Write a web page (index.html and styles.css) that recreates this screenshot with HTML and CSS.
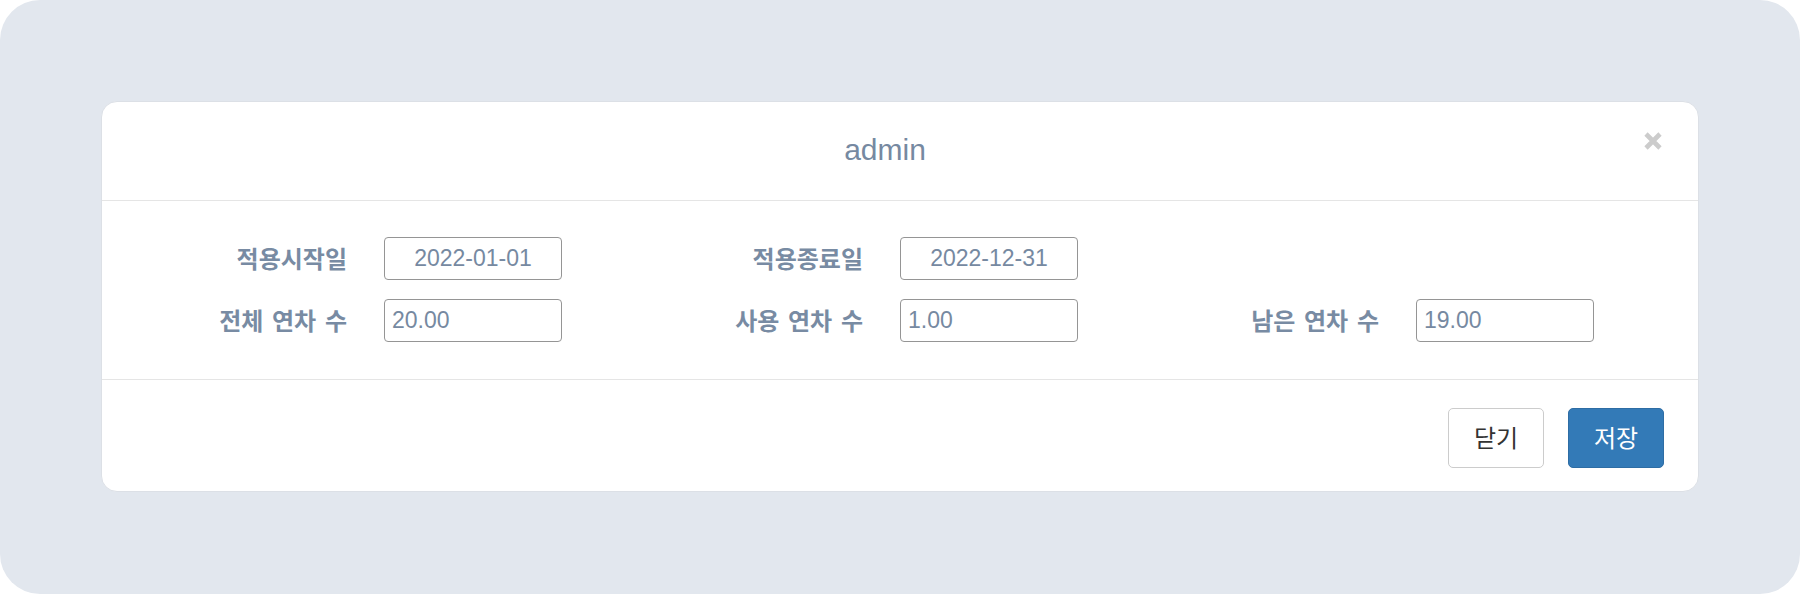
FILE: index.html
```html
<!DOCTYPE html>
<html lang="ko">
<head>
<meta charset="utf-8">
<title>admin</title>
<link rel="stylesheet" href="styles.css">
</head>
<body>
<div class="screen">
  <div class="modal">
    <div class="modal-header">
      <h4 class="modal-title">admin</h4>
      <button class="close" type="button" aria-label="close">
        <svg width="20" height="18" viewBox="0 0 20 18"><path d="M3 2 L17 16 M17 2 L3 16" stroke="#cccccc" stroke-width="4.6" stroke-linecap="butt"/></svg>
      </button>
    </div>
    <div class="modal-body">
      <div class="form-row">
        <div class="field"><label class="label">적용시작일</label><input class="input center" type="text" value="2022-01-01"></div>
        <div class="field"><label class="label">적용종료일</label><input class="input center" type="text" value="2022-12-31"></div>
      </div>
      <div class="form-row">
        <div class="field"><label class="label">전체 연차 수</label><input class="input" type="text" value="20.00"></div>
        <div class="field"><label class="label">사용 연차 수</label><input class="input" type="text" value="1.00"></div>
        <div class="field"><label class="label">남은 연차 수</label><input class="input" type="text" value="19.00"></div>
      </div>
    </div>
    <div class="modal-footer">
      <button class="btn btn-default" type="button">닫기</button>
      <button class="btn btn-primary" type="button">저장</button>
    </div>
  </div>
</div>
</body>
</html>
```

FILE: styles.css
```css
* { box-sizing: border-box; }
html, body { margin: 0; padding: 0; background: #ffffff; }
body {
  font-family: "Liberation Sans", "Noto Sans CJK KR", Arial, sans-serif;
}
.screen {
  width: 1800px;
  height: 594px;
  background: #e2e7ee;
  border-radius: 40px;
  padding: 101px 101px 102px 101px;
}
.modal {
  width: 1598px;
  height: 391px;
  background: #ffffff;
  border: 1px solid #dce0e6;
  border-radius: 16px;
  display: flex;
  flex-direction: column;
}
.modal-header {
  height: 99px;
  border-bottom: 1px solid #e5e5e5;
  display: flex;
  align-items: center;
  padding: 0 35px 0 25px;
}
.modal-title {
  flex: 1;
  margin: 0;
  text-align: center;
  font-size: 30px;
  font-weight: normal;
  color: #7689a1;
  padding-bottom: 2px;
}
.close {
  border: 0;
  background: transparent;
  padding: 0;
  width: 20px;
  height: 18px;
  align-self: flex-start;
  margin-top: 30px;
  display: block;
}
.close svg { display: block; }
.modal-body {
  height: 178px;
  padding: 36px 15px 36px 15px;
  display: flex;
  flex-direction: column;
  gap: 19px;
}
.form-row {
  display: grid;
  grid-template-columns: repeat(3, 516px);
  height: 43px;
}
.field {
  display: flex;
  align-items: center;
  gap: 37px;
}
.label {
  width: 230px;
  text-align: right;
  font-family: "Noto Sans CJK KR", "Liberation Sans", sans-serif;
  font-size: 24px;
  font-weight: bold;
  color: #788ba3;
  word-spacing: 2px;
  padding-bottom: 3px;
}
.input {
  width: 178px;
  height: 43px;
  border: 1px solid #959595;
  border-radius: 4px;
  padding: 0 7px;
  font-family: "Liberation Sans", Arial, sans-serif;
  font-size: 23px;
  color: #7689a1;
  background: #ffffff;
  outline: none;
}
.input.center { text-align: center; }
.modal-footer {
  flex: 1;
  border-top: 1px solid #e5e5e5;
  display: flex;
  justify-content: flex-end;
  align-items: flex-start;
  padding: 28px 34px 0 0;
  gap: 24px;
}
.btn {
  width: 96px;
  height: 60px;
  border-radius: 5px;
  font-family: "Noto Sans CJK KR", "Liberation Sans", sans-serif;
  font-size: 24px;
  padding: 0 0 3px 0;
}
.btn-default {
  background: #ffffff;
  border: 1px solid #cccccc;
  color: #333333;
}
.btn-primary {
  background: #337ab7;
  border: 1px solid #2e6da4;
  color: #ffffff;
}
```
